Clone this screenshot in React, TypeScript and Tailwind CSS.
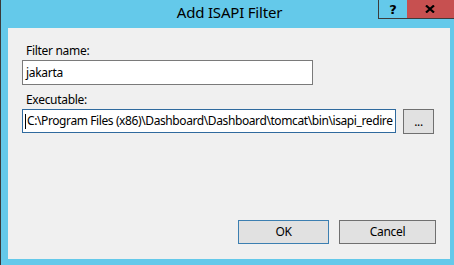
import React from "react";

export default function App() {
  const font = { fontFamily: '"Noto Sans", "Segoe UI", sans-serif' };
  return (
    <div
      className="relative w-[454px] h-[265px] bg-[#64c9ea] border-l border-[#3a3a3a] flex flex-col overflow-hidden"
      style={font}
    >
      {/* Title bar */}
      <div className="h-[28px] shrink-0 flex items-start">
        <div className="flex-1 text-center text-[15px] leading-[20px] pt-[2px] pl-[4px] tracking-[-0.2px] text-black">
          Add ISAPI Filter
        </div>
      </div>
      <div className="absolute top-0 right-0 flex h-[19px]">
        <div className="w-[29px] h-[19px] border-l border-b border-[#3c3c3c] flex items-center justify-center">
          <span className="text-[13px] font-bold leading-none text-black" style={{ fontFamily: '"DejaVu Sans", sans-serif' }}>?</span>
        </div>
        <div className="w-[47px] h-[19px] bg-[#c75050] border-b border-[#3c3c3c] flex items-center justify-center pr-[2px]">
          <svg width="10" height="8" viewBox="0 0 10 8">
            <path d="M1 0.5 L9 7.5 M9 0.5 L1 7.5" stroke="#000" strokeWidth="2.2" />
          </svg>
        </div>
      </div>

      {/* Content */}
      <div className="ml-[7px] w-[442px] h-[231px] bg-[#f0f0f0] flex flex-col text-[12px] tracking-[-0.3px] text-black">
        <div className="pl-[18px] pt-[15px] leading-[16px] h-[32px]">Filter name:</div>
        <div className="ml-[14px] w-[291px] h-[25px] bg-white border border-[#7a7a7a] flex items-center pl-[3px] leading-[16px]">
          jakarta
        </div>
        <div className="pl-[18px] pt-[7px] leading-[16px] h-[24px]">Executable:</div>
        <div className="ml-[14px] flex items-start gap-[7px]">
          <div className="w-[374px] h-[24px] bg-white border border-[#2f6a9e] flex items-center pl-[2px] overflow-hidden whitespace-nowrap leading-[16px]">
            <span className="w-px h-[15px] bg-black mr-[1px] shrink-0" />
            <span className="tracking-[-0.4px]">C:\Program Files (x86)\Dashboard\Dashboard\tomcat\bin\isapi_redire</span>
          </div>
          <div className="w-[31px] h-[25px] bg-[#e1e1e1] border border-[#707070] flex items-center justify-center leading-[16px]">
            ...
          </div>
        </div>
        <div className="flex-1" />
        <div className="flex justify-end gap-[10px] pr-[14px] pb-[15px]">
          <div className="w-[91px] h-[24px] bg-[#e1e1e1] border border-[#3c7fb1] flex items-center justify-center leading-[16px]">
            OK
          </div>
          <div className="w-[97px] h-[24px] bg-[#e1e1e1] border border-[#707070] flex items-center justify-center leading-[16px]">
            Cancel
          </div>
        </div>
      </div>
    </div>
  );
}
